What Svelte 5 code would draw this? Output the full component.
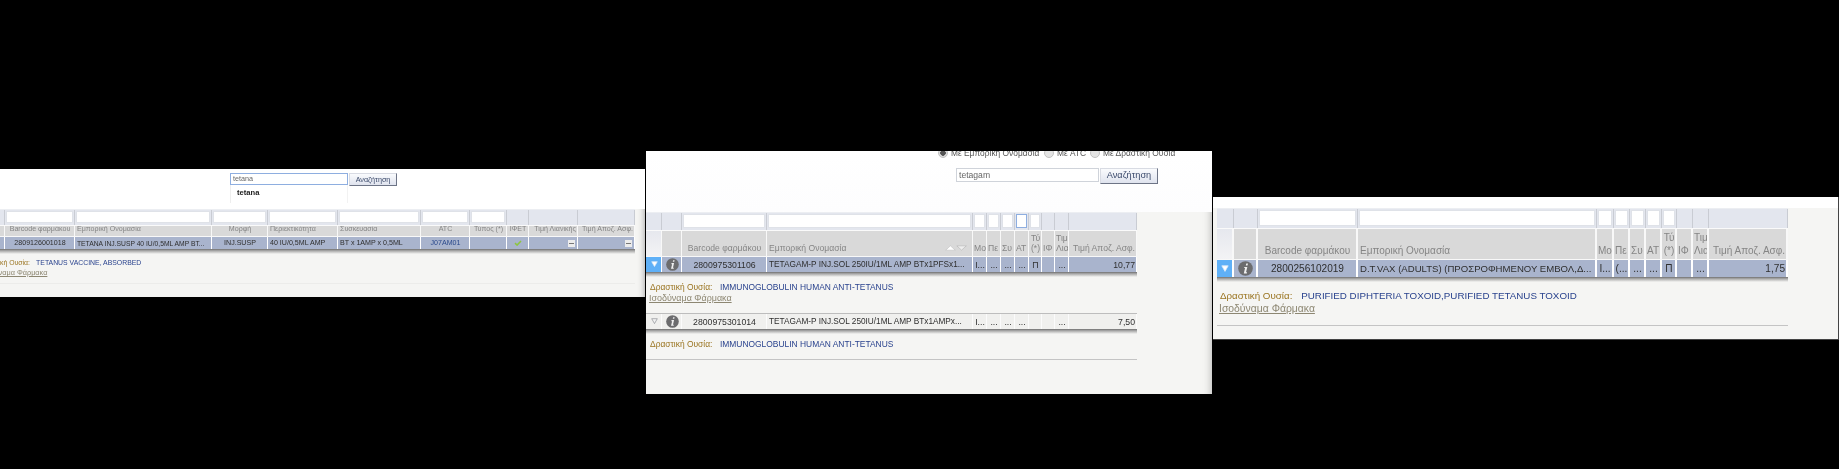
<script>
  const panels = [
    {
      id: 'one', left: -36, top: 169, width: 681, height: 128, font: 7.1, headFont: 7.1, icon: 11, tri: 6,
      tableLeft: 0, tableWidth: 671,
      whiteH: 40, filterH: 16, headH: 11, rowH: 13,
      cols: [19, 22, 70, 137, 56, 70, 83, 49, 37, 22, 49, 57],
      filters: [0, 0, 1, 1, 1, 1, 1, 1, 1, 0, 0, 0],
      heads: ['', '', 'Barcode φαρμάκου', 'Εμπορική Ονομασία', 'Μορφή', 'Περιεκτικότητα', 'Συσκευασία', 'ATC', 'Τύπος (*)', 'ΙΦΕΤ', 'Τιμή Λιανικής', 'Τιμή Αποζ. Ασφ.'],
      headAlign: ['c', 'c', 'c', 'l', 'c', 'l', 'l', 'c', 'c', 'c', 'r', 'r'],
      blocks: [
        {
          selected: true,
          cells: ['', '', '2809126001018', 'TETANA INJ.SUSP 40 IU/0,5ML AMP BT...', 'INJ.SUSP', '40 IU/0,5ML AMP', 'BT x 1AMP x 0,5ML', 'J07AM01', '', 'check', 'minus', 'minus'],
          align: ['c', 'c', 'c', 'l', 'c', 'l', 'l', 'c', 'c', 'c', 'r', 'r'],
          substance: 'TETANUS VACCINE, ABSORBED', link: true
        }
      ]
    },
    {
      id: 'two', left: 646, top: 151, width: 566, height: 243, font: 8.7, headFont: 8.6, icon: 13, tri: 7,
      tableLeft: 0, tableWidth: 491,
      whiteH: 61, filterH: 18, headH: 26, rowH: 16,
      cols: [16, 20, 85, 206, 14, 14, 14, 14, 13, 13, 14, 68],
      filters: [0, 0, 1, 1, 1, 1, 1, 1, 1, 0, 0, 0],
      heads: ['', '', 'Barcode φαρμάκου', 'Εμπορική Ονομασία', 'Μο', 'Πε', 'Συ', 'ΑΤ', 'Τύ (*)', 'ΙΦ', 'Τιμ Λιαν', 'Τιμή Αποζ. Ασφ.'],
      headAlign: ['c', 'c', 'c', 'l', 'l', 'l', 'l', 'l', 'c', 'l', 'l', 'r'],
      sort: true, focus: 7,
      search: { value: 'tetagam' },
      blocks: [
        {
          selected: true,
          cells: ['', '', '2800975301106', 'TETAGAM-P INJ.SOL 250IU/1ML AMP BTx1PFSx1...', 'I...', '...', '...', '...', 'Π', '', '...', '10,77'],
          align: ['c', 'c', 'c', 'l', 'c', 'c', 'c', 'c', 'c', 'c', 'c', 'r'],
          substance: 'IMMUNOGLOBULIN HUMAN ANTI-TETANUS', link: true
        },
        {
          selected: false,
          cells: ['', '', '2800975301014', 'TETAGAM-P INJ.SOL 250IU/1ML AMP BTx1AMPx...', 'I...', '...', '...', '...', '', '', '...', '7,50'],
          align: ['c', 'c', 'c', 'l', 'c', 'c', 'c', 'c', 'c', 'c', 'c', 'r'],
          substance: 'IMMUNOGLOBULIN HUMAN ANTI-TETANUS', link: false, line: true
        }
      ]
    },
    {
      id: 'three', left: 1213, top: 197, width: 626, height: 143, font: 10.1, headFont: 10, icon: 15, tri: 8,
      tableLeft: 4, tableWidth: 571,
      whiteH: 11, filterH: 20, headH: 31, rowH: 18,
      cols: [17, 24, 100, 239, 17, 16, 16, 16, 15, 16, 16, 79],
      filters: [0, 0, 1, 1, 1, 1, 1, 1, 1, 0, 0, 0],
      heads: ['', '', 'Barcode φαρμάκου', 'Εμπορική Ονομασία', 'Μο', 'Πε', 'Συ', 'ΑΤ', 'Τύ (*)', 'ΙΦ', 'Τιμ Λια', 'Τιμή Αποζ. Ασφ.'],
      headAlign: ['c', 'c', 'c', 'l', 'l', 'l', 'l', 'l', 'c', 'l', 'l', 'r'],
      blocks: [
        {
          selected: true,
          cells: ['', '', '2800256102019', 'D.T.VAX (ADULTS) (ΠΡΟΣΡΟΦΗΜΕΝΟΥ ΕΜΒΟΛ,Δ...', 'I...', '(...', '...', '...', 'Π', '', '...', '1,75'],
          align: ['c', 'c', 'c', 'l', 'c', 'c', 'c', 'c', 'c', 'c', 'c', 'r'],
          substance: 'PURIFIED DIPHTERIA TOXOID,PURIFIED TETANUS TOXOID', link: true, line: true
        }
      ]
    }
  ];

  const gridOf = (p) => p.cols.map((c) => c + 'px').join(' ');
</script>

<div class="desktop">
  {#each panels as p}
    <section
      class="window {p.id}"
      style="left:{p.left}px;top:{p.top}px;width:{p.width}px;height:{p.height}px;font-size:{p.font}px"
    >
      <div class="top" style="height:{p.whiteH}px">
        {#if p.search}
          <div class="radios">
            <span class="radio on"></span><span class="rlabel a">Με Εμπορική Ονομασία</span>
            <span class="radio"></span><span class="rlabel b">Με ATC</span>
            <span class="radio"></span><span class="rlabel">Με Δραστική Ουσία</span>
          </div>
          <div class="searchrow">
            <span class="field">{p.search.value}</span>
            <span class="btn">Αναζήτηση</span>
          </div>
        {/if}
        {#if p.id === 'one'}
          <div class="searchrow small">
            <div class="fieldwrap">
              <span class="field focus">tetana</span>
              <div class="suggest">tetana</div>
            </div>
            <span class="btn">Αναζήτηση</span>
          </div>
        {/if}
      </div>

      <div class="table" style="margin-left:{p.tableLeft}px;width:{p.tableWidth}px">
        <div class="grid filters" style="grid-template-columns:{gridOf(p)};height:{p.filterH}px">
          {#each p.cols as _, i}
            <div class="fcell">
              {#if p.filters[i]}
                <span class="finput" class:focused={p.focus === i}></span>
              {/if}
            </div>
          {/each}
        </div>
        <div class="grid heads" style="grid-template-columns:{gridOf(p)};height:{p.headH}px;font-size:{p.headFont}px">
          {#each p.heads as h, i}
            <div class="hcell {p.headAlign[i]}" class:blank={i === 0} class:wrap={p.cols[i] < 20}>
              <span class="htext">{h}</span>
              {#if p.sort && i === 3}
                <svg class="sort" viewBox="0 0 24 7" width="22" height="6" aria-hidden="true">
                  <path d="M0 6 L5.500 1 L11 6 Z" fill="#fff" stroke="#bbb" stroke-width=".6" />
                  <path d="M13 1 L18.500 6 L24 1 Z" fill="#eee" stroke="#aaa" stroke-width=".6" />
                </svg>
              {/if}
            </div>
          {/each}
        </div>
        {#each p.blocks as b}
          <div class="grid row" class:sel={b.selected} style="grid-template-columns:{gridOf(p)};height:{p.rowH}px">
            {#each b.cells as c, i}
              <div class="cell {b.align[i]}" class:expander={i === 0} class:name={i === 3} class:blue={c === 'J07AM01'}>
                {#if i === 0}
                  <svg viewBox="0 0 10 9" width={p.tri} height={p.tri * 0.9} aria-hidden="true">
                    <path d="M1 1 H9 L5 8 Z" fill={b.selected ? '#fff' : '#f2f2f2'} stroke={b.selected ? '#dce9f7' : '#8f9297'} stroke-width="1" />
                  </svg>
                {:else if i === 1}
                  <svg viewBox="0 0 14 14" width={p.icon} height={p.icon} aria-hidden="true">
                    <circle cx="7" cy="7" r="6.800" fill="#6c6c6e" />
                    <path d="M7.700 2.400h1.600l-.4 1.700H7.300zM6 5.500h2.700L7.500 10.600h1l-.3 1.100H5.400l1.200-5.100h-.9z" fill="#f0f0f0" />
                  </svg>
                {:else if c === 'check'}
                  <svg viewBox="0 0 10 8" width="8" height="6" aria-hidden="true">
                    <path d="M1 4.200 L3.800 6.800 L9 1.200" fill="none" stroke="#8cc63f" stroke-width="2" />
                  </svg>
                {:else if c === 'minus'}
                  <span class="minus"></span>
                {:else}
                  <span class="ctext">{c}</span>
                {/if}
              </div>
            {/each}
          </div>
          <div class="detail">
            <div class="shadow"></div>
            <div class="sub"><span class="sublabel">Δραστική Ουσία:</span><span class="subvalue">{b.substance}</span></div>
            {#if b.link}<div class="equiv"><span>Ισοδύναμα Φάρμακα</span></div>{/if}
            {#if b.line}<div class="rule"></div>{/if}
          </div>
        {/each}
        {#if p.id === 'one'}<div class="rule soft"></div>{/if}
      </div>
    </section>
  {/each}
</div>

<style>
  :global(body) {
    margin: 0;
    background: #000;
  }
  .desktop {
    position: relative;
    width: 1839px;
    height: 469px;
    overflow: hidden;
    background: #000;
    font-family: "Liberation Sans", Arial, sans-serif;
    color: #3d3d3d;
  }
  .window {
    position: absolute;
    overflow: hidden;
    background: #f5f5f3;
    box-sizing: border-box;
    filter: blur(0.3px);
  }
  .one {
    filter: blur(0.45px);
    box-shadow: inset -7px 0 7px -7px #999;
  }
  .two {
    box-shadow: inset -9px 0 9px -9px #aaa;
  }
  .three {
    border-right: 1px solid #444;
    border-bottom: 1px solid #444;
  }
  .top {
    display: flow-root;
    background: #fff;
    box-sizing: border-box;
  }
  .one .top {
    padding: 4px 0 0 266px;
    position: relative;
    z-index: 2;
  }
  .two .top {
    padding: 0 0 0 292px;
    background: linear-gradient(#fff, #fdfdfe);
  }
  .radios {
    display: flex;
    align-items: center;
    height: 10px;
    margin-top: -3px;
    margin-bottom: 10px;
    color: #555;
    white-space: nowrap;
    font-size: 8.4px;
  }
  .radio {
    width: 10px;
    height: 10px;
    box-sizing: border-box;
    border-radius: 50%;
    background: #e4e4e4;
    border: 1px solid #c2c2c2;
    margin-right: 3px;
    flex: none;
  }
  .radio.on {
    background: radial-gradient(circle, #555 0 2.500px, #ddd 3px);
  }
  .rlabel.a {
    width: 93px;
  }
  .rlabel.b {
    width: 33px;
  }
  .searchrow {
    display: flex;
    align-items: flex-start;
    gap: 1px;
    margin-left: 18px;
  }
  .searchrow.small {
    margin-left: 0;
  }
  .fieldwrap {
    position: relative;
  }
  .field {
    display: block;
    box-sizing: border-box;
    width: 143px;
    height: 14px;
    line-height: 12px;
    padding-left: 2px;
    border: 1px solid #cfd3da;
    background: #fff;
    color: #666;
    font-size: 8.6px;
  }
  .field.focus {
    width: 118px;
    height: 12px;
    line-height: 10px;
    font-size: 7.2px;
    border-color: #8eaee0;
  }
  .suggest {
    position: absolute;
    left: 0;
    top: 12px;
    width: 118px;
    height: 18px;
    box-sizing: border-box;
    padding-left: 6px;
    line-height: 16px;
    background: #fff;
    border-left: 1px solid #eee;
    border-right: 1px solid #f2f2f2;
    font-weight: 700;
    color: #222;
    font-size: 7.6px;
  }
  .btn {
    display: block;
    box-sizing: border-box;
    width: 58px;
    height: 16px;
    line-height: 13px;
    text-align: center;
    background: linear-gradient(#fafbfd, #dfe3ee);
    border: 1px solid #d8dbe3;
    border-right-color: #6d7486;
    border-bottom-color: #6d7486;
    color: #3b4a6b;
    font-size: 9.2px;
  }
  .one .btn {
    width: 48px;
    height: 13px;
    line-height: 11px;
    font-size: 7.2px;
  }
  .table {
    box-sizing: border-box;
  }
  .grid {
    display: grid;
    box-sizing: border-box;
  }
  .filters {
    background: #e3e6ee;
    border-top: 1px solid #eceef2;
  }
  .fcell {
    display: flex;
    box-sizing: border-box;
    padding: 1px 1px 2px;
    border-right: 1px solid #c9ccd3;
    min-width: 0;
  }
  .finput {
    flex: 1;
    min-width: 0;
    background: #fff;
    border: 1px solid #dfe2e8;
  }
  .finput.focused {
    border-color: #8eaee0;
  }
  .heads {
    background: #d9d9d9;
    border-top: 1px solid #fafafa;
    color: #858585;
  }
  .hcell {
    display: flex;
    align-items: flex-end;
    position: relative;
    box-sizing: border-box;
    padding: 0 1px 2px 2px;
    line-height: 1.25;
    border-right: 1px solid #f8f8f8;
    overflow: hidden;
    white-space: nowrap;
    min-width: 0;
  }
  .three .hcell,
  .three .cell {
    border-right-width: 2px;
  }
  .hcell.wrap {
    white-space: normal;
    padding-left: 1px;
    padding-right: 0;
  }
  .hcell.c {
    justify-content: center;
    text-align: center;
  }
  .hcell.r {
    justify-content: flex-end;
    text-align: right;
  }
  .hcell.blank {
    background: linear-gradient(#e6e8ee, #f3f3f5);
  }
  .htext {
    min-width: 0;
  }
  .sort {
    position: absolute;
    right: 5px;
    bottom: 5px;
  }
  .row {
    background: #f0f0ee;
    border-top: 1px solid #bdbdbd;
    color: #2f2f2f;
  }
  .row.sel {
    background: #a9b4cd;
    border-top-color: #f8f8f8;
  }
  .cell {
    display: flex;
    align-items: center;
    box-sizing: border-box;
    padding: 0 1px 0 2px;
    border-right: 1px solid #fff;
    overflow: hidden;
    white-space: nowrap;
    min-width: 0;
  }
  .cell.name {
    font-size: 0.95em;
  }
  .cell.c {
    justify-content: center;
  }
  .cell.r {
    justify-content: flex-end;
  }
  .row.sel .cell.expander {
    background: #5fb0f7;
  }
  .row:not(.sel) .cell {
    border-right-color: #fbfbfb;
  }
  .cell.blue {
    color: #2c4a8c;
  }
  .minus {
    position: relative;
    display: block;
    width: 7px;
    height: 7px;
    margin-right: 1px;
    background: #ececec;
  }
  .minus::after {
    content: "";
    position: absolute;
    left: 1px;
    right: 1px;
    top: 3px;
    height: 1px;
    background: #777;
  }
  .shadow {
    height: 5px;
    background: linear-gradient(#707070 0, #a8a8a8 35%, #f5f5f3 100%);
  }
  .sub {
    white-space: nowrap;
    padding-left: 4px;
    font-size: 0.97em;
  }
  .sublabel {
    color: #9a7420;
    margin-right: 0.9em;
  }
  .subvalue {
    color: #2a438e;
  }
  .equiv {
    color: #8d8772;
    padding-left: 3px;
    font-size: 1.03em;
  }
  .equiv span {
    text-decoration: underline;
  }
  .rule {
    height: 1px;
    background: #c4c4c4;
  }
  .rule.soft {
    background: #ececea;
  }
  .one .sub {
    padding-left: 15px;
    padding-top: 4px;
    line-height: 10px;
  }
  .one .equiv {
    padding-left: 16px;
    line-height: 9px;
  }
  .one .rule.soft {
    margin-top: 6px;
  }
  .two .sub {
    padding-top: 5px;
    line-height: 11px;
  }
  .two .equiv {
    line-height: 11px;
    padding-bottom: 9px;
  }
  .two .rule {
    margin-top: 9px;
  }
  .three .sub {
    padding-left: 3px;
    padding-top: 7px;
    line-height: 13px;
  }
  .three .equiv {
    padding-left: 2px;
    line-height: 13px;
  }
  .three .rule {
    margin-top: 10px;
  }
</style>
